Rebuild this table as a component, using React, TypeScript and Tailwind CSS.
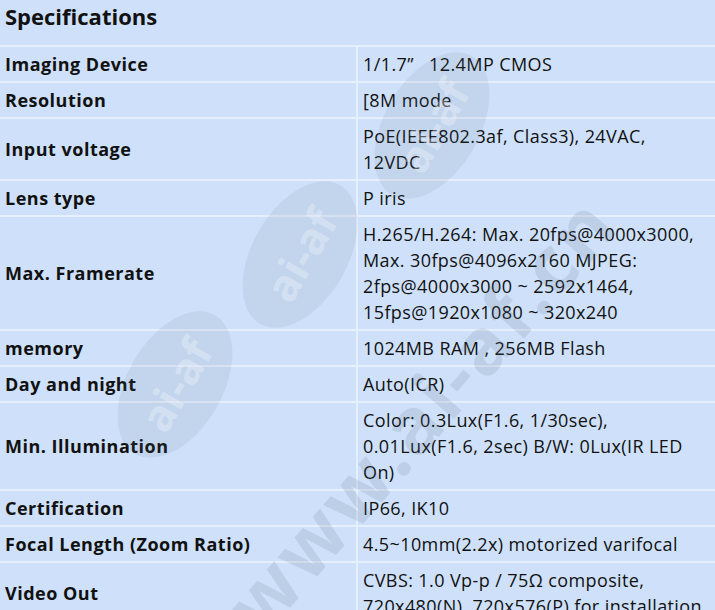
import React from "react"

type Spec = { label: string; value: string[] }

const specs: Spec[] = [
	{ label: "Imaging Device", value: ["1/1.7\u201D\u00A0\u00A0\u00A012.4MP CMOS"] },
	{ label: "Resolution", value: ["[8M mode"] },
	{ label: "Input voltage", value: ["PoE(IEEE802.3af, Class3), 24VAC,", "12VDC"] },
	{ label: "Lens type", value: ["P iris"] },
	{
		label: "Max. Framerate",
		value: [
			"H.265/H.264: Max. 20fps@4000x3000,",
			"Max. 30fps@4096x2160 MJPEG:",
			"2fps@4000x3000 ~ 2592x1464,",
			"15fps@1920x1080 ~ 320x240",
		],
	},
	{ label: "memory", value: ["1024MB RAM , 256MB Flash"] },
	{ label: "Day and night", value: ["Auto(ICR)"] },
	{
		label: "Min. Illumination",
		value: ["Color: 0.3Lux(F1.6, 1/30sec),", "0.01Lux(F1.6, 2sec) B/W: 0Lux(IR LED", "On)"],
	},
	{ label: "Certification", value: ["IP66, IK10"] },
	{ label: "Focal Length (Zoom Ratio)", value: ["4.5~10mm(2.2x) motorized varifocal"] },
	{
		label: "Video Out",
		value: ["CVBS: 1.0 Vp-p / 75\u03A9 composite,", "720x480(N), 720x576(P) for installation"],
	},
]

// faint site watermark laid over the table
const Watermark: React.FC = () => (
	<div className="pointer-events-none absolute inset-0 overflow-hidden">
		<div className="absolute left-[352px] top-[78px] flex h-[95px] w-[160px] -rotate-[60deg] items-center justify-center rounded-[50%] bg-[#5a6a80]/10">
			<span className="text-[44px] font-bold text-white/30">ai-af</span>
		</div>
		<div className="absolute left-[220px] top-[207px] flex h-[95px] w-[160px] -rotate-[60deg] items-center justify-center rounded-[50%] bg-[#5a6a80]/10">
			<span className="text-[44px] font-bold text-white/30">ai-af</span>
		</div>
		<div className="absolute left-[95px] top-[337px] flex h-[95px] w-[160px] -rotate-[60deg] items-center justify-center rounded-[50%] bg-[#5a6a80]/10">
			<span className="text-[44px] font-bold text-white/30">ai-af</span>
		</div>
		<div className="absolute left-[110px] top-[355px] w-[620px] -rotate-[49deg] text-center text-[78px] font-bold tracking-[3px] text-[#5a6a80]/15">
			www.ai-af.cn
		</div>
	</div>
)

const App: React.FC = () => {
	return (
		<div className="relative h-[610px] w-[715px] overflow-hidden bg-[#cfe1fa] font-['Open_Sans',sans-serif] text-[#111]">
			<div className="h-[45px] px-[5px] text-[22px] font-bold leading-[32px]">Specifications</div>
			{specs.map((s) => (
				<div key={s.label} className="grid grid-cols-[358px_1fr] border-t-2 border-[#e6effd]">
					<div className="flex items-center border-r-2 border-[#e6effd] px-[5px] py-[4px] text-[18px] font-bold leading-[26px] tracking-[0.5px]">
						{s.label}
					</div>
					<div className="px-[5px] py-[4px] text-[18px] leading-[26px] tracking-[0.4px]">
						{s.value.map((line, i) => (
							<div key={i} className="whitespace-nowrap">
								{line}
							</div>
						))}
					</div>
				</div>
			))}
			<Watermark />
		</div>
	)
}

export default App
